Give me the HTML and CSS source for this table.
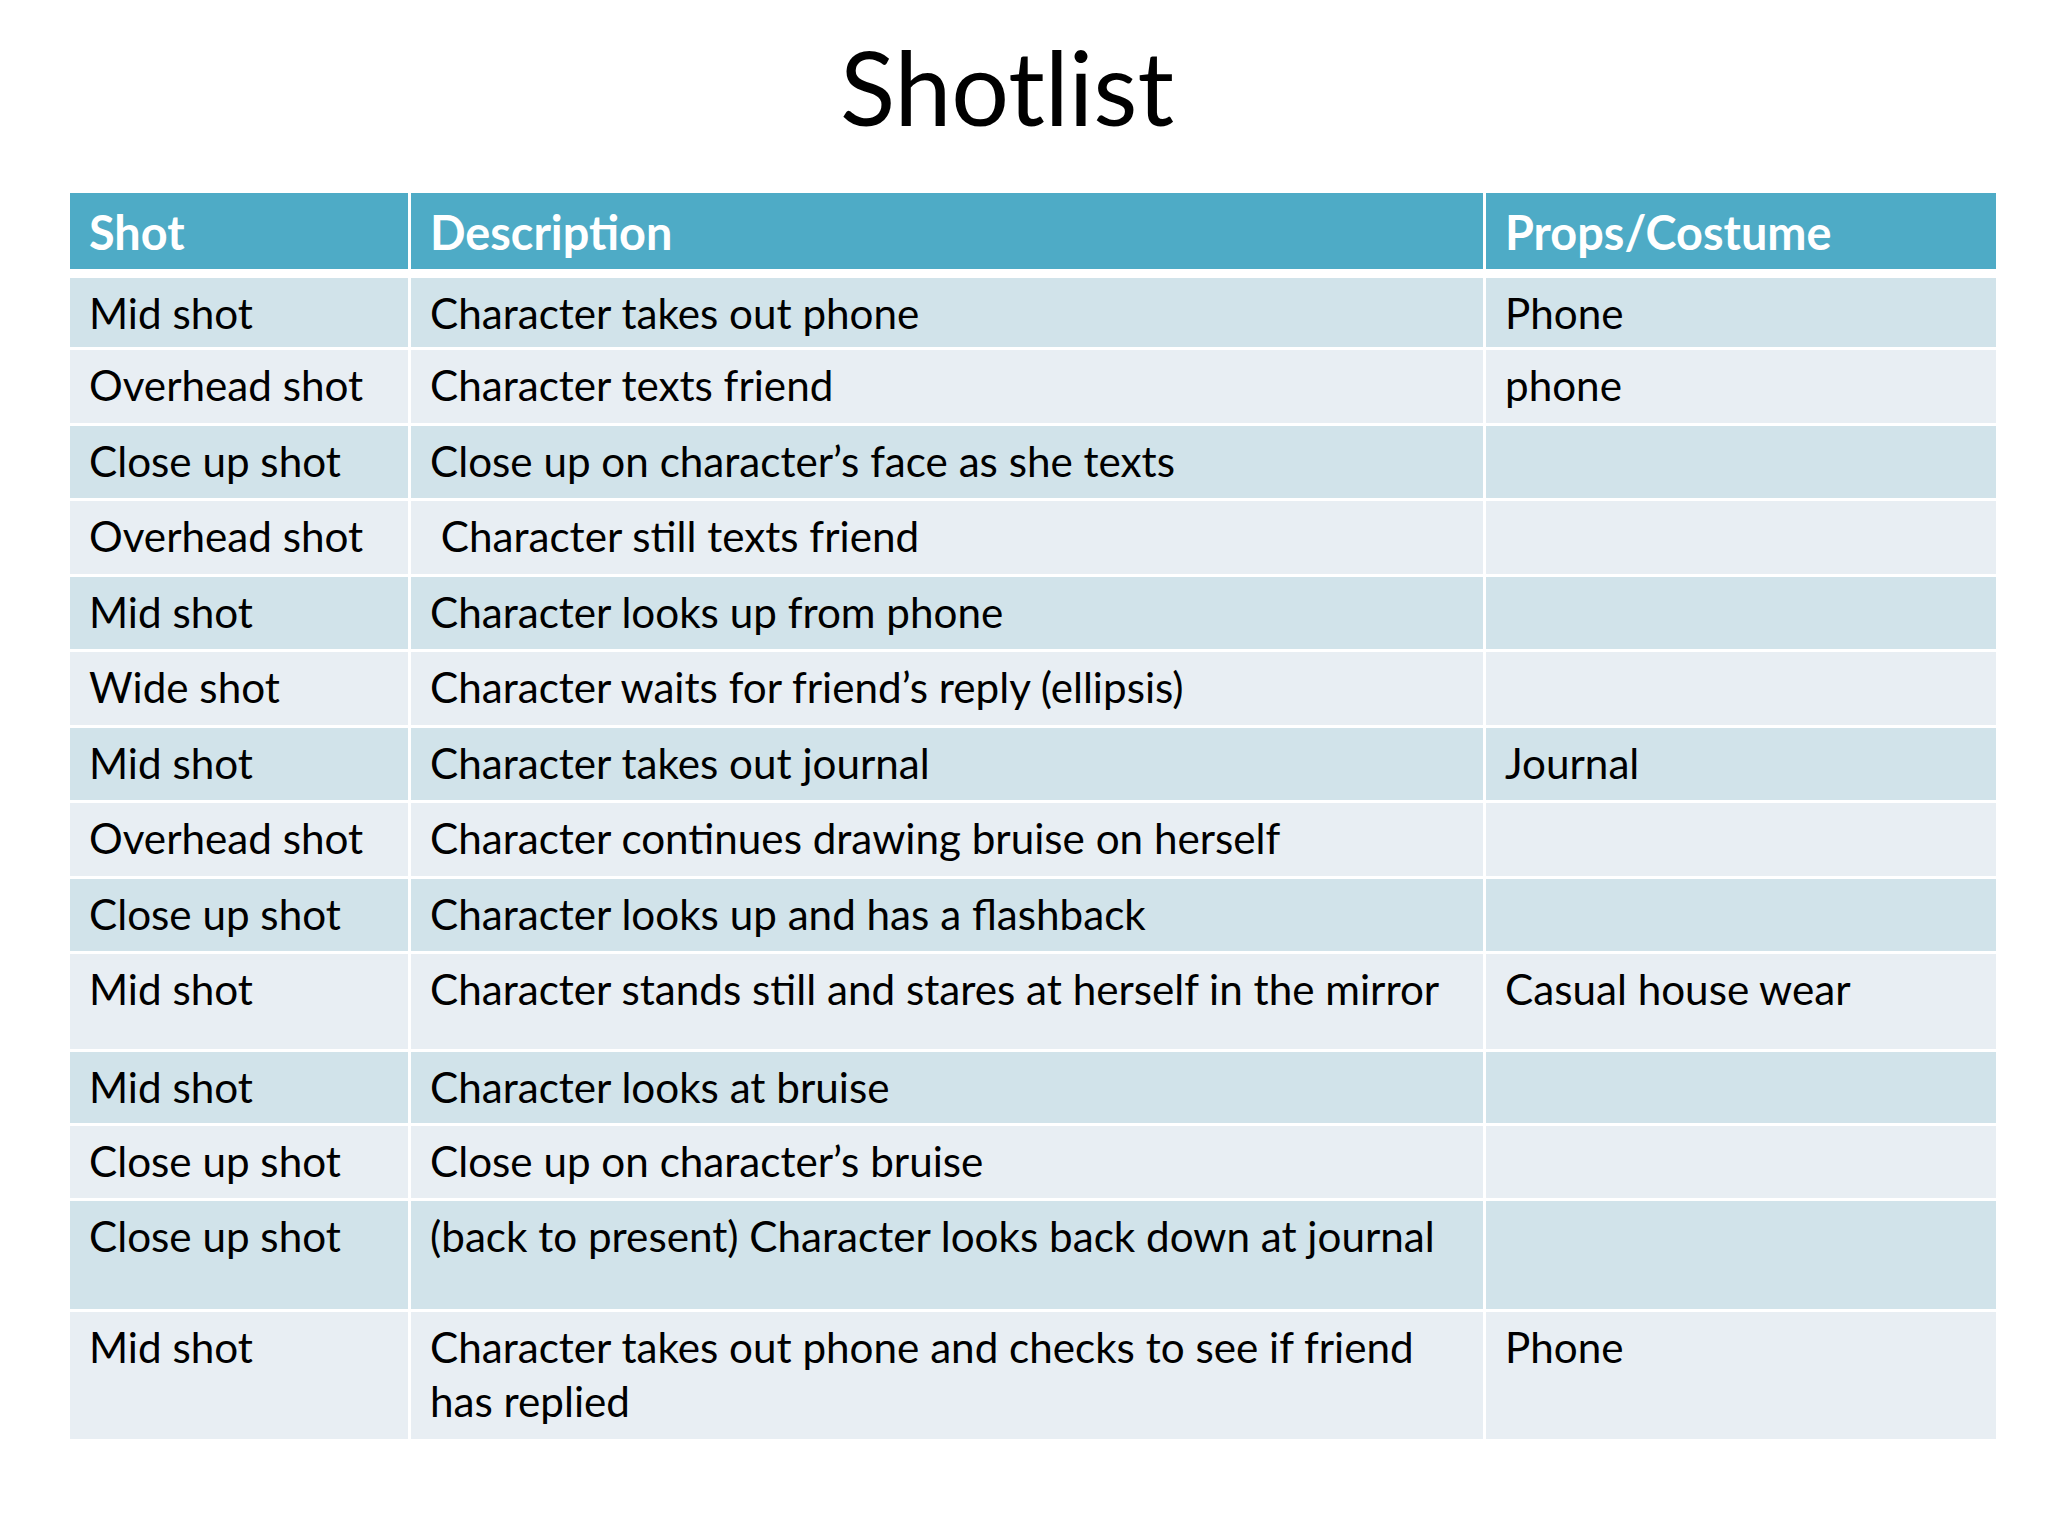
FILE: index.html
```html
<!DOCTYPE html>
<html lang="en">
<head>
<meta charset="utf-8">
<title>Shotlist</title>
<link rel="stylesheet" href="styles.css">
</head>
<body>
<main class="slide">
  <h1 class="title">Shotlist</h1>
  <div class="table">
    <div class="grid grid-head">
      <div class="cell head">Shot</div>
      <div class="cell head">Description</div>
      <div class="cell head">Props/Costume</div>
    </div>
    <div class="grid grid-body">
      <div class="row dark"><div class="cell">Mid shot</div><div class="cell">Character takes out phone</div><div class="cell">Phone</div></div>
      <div class="row light"><div class="cell">Overhead shot</div><div class="cell">Character texts friend</div><div class="cell">phone</div></div>
      <div class="row dark"><div class="cell">Close up shot</div><div class="cell">Close up on character’s face as she texts</div><div class="cell"></div></div>
      <div class="row light"><div class="cell">Overhead shot</div><div class="cell">&nbsp;Character still texts friend</div><div class="cell"></div></div>
      <div class="row dark"><div class="cell">Mid shot</div><div class="cell">Character looks up from phone</div><div class="cell"></div></div>
      <div class="row light"><div class="cell">Wide shot</div><div class="cell">Character waits for friend’s reply (ellipsis)</div><div class="cell"></div></div>
      <div class="row dark"><div class="cell">Mid shot</div><div class="cell">Character takes out journal</div><div class="cell">Journal</div></div>
      <div class="row light"><div class="cell">Overhead shot</div><div class="cell">Character continues drawing bruise on herself</div><div class="cell"></div></div>
      <div class="row dark"><div class="cell">Close up shot</div><div class="cell">Character looks up and has a flashback</div><div class="cell"></div></div>
      <div class="row light"><div class="cell">Mid shot</div><div class="cell">Character stands still and stares at herself in the mirror</div><div class="cell">Casual house wear</div></div>
      <div class="row dark"><div class="cell">Mid shot</div><div class="cell">Character looks at bruise</div><div class="cell"></div></div>
      <div class="row light"><div class="cell">Close up shot</div><div class="cell">Close up on character’s bruise</div><div class="cell"></div></div>
      <div class="row dark"><div class="cell">Close up shot</div><div class="cell">(back to present) Character looks back down at journal</div><div class="cell"></div></div>
      <div class="row light"><div class="cell">Mid shot</div><div class="cell">Character takes out phone and checks to see if friend has replied</div><div class="cell">Phone</div></div>
    </div>
  </div>
</main>
</body>
</html>
```
FILE: styles.css
```css
html, body {
  margin: 0;
  padding: 0;
  background: #ffffff;
}

.slide {
  width: 2048px;
  height: 1536px;
  overflow: hidden;
  font-family: "Lato", "Open Sans", sans-serif;
  color: #000000;
}

.title {
  margin: 0;
  padding: 36px 34px 0 0;
  font-size: 102px;
  line-height: 102px;
  font-weight: 400;
  text-align: center;
  color: #000000;
}

.table {
  margin: 55px 0 0 70px;
  width: 1926px;
}

.grid {
  display: grid;
  grid-template-columns: 338px 1072px 510px;
  column-gap: 3px;
}

.grid-head {
  grid-template-rows: 76px;
  margin-bottom: 9px;
}

.grid-body {
  row-gap: 3px;
  grid-template-rows: 69px repeat(8, 72.5px) 95px 71px 72px 108px 127px;
}

.row {
  display: contents;
}

.cell {
  padding: 8px 16px 0 19px;
  font-size: 42.2px;
  line-height: 54px;
  overflow: hidden;
}

.cell.head {
  background: #4eabc6;
  color: #ffffff;
  font-weight: 700;
  font-size: 46.8px;
  line-height: 53px;
  padding-top: 13px;
}

.row.dark > .cell {
  background: #d1e3ea;
}

.row.light > .cell {
  background: #e8eef3;
}
```
